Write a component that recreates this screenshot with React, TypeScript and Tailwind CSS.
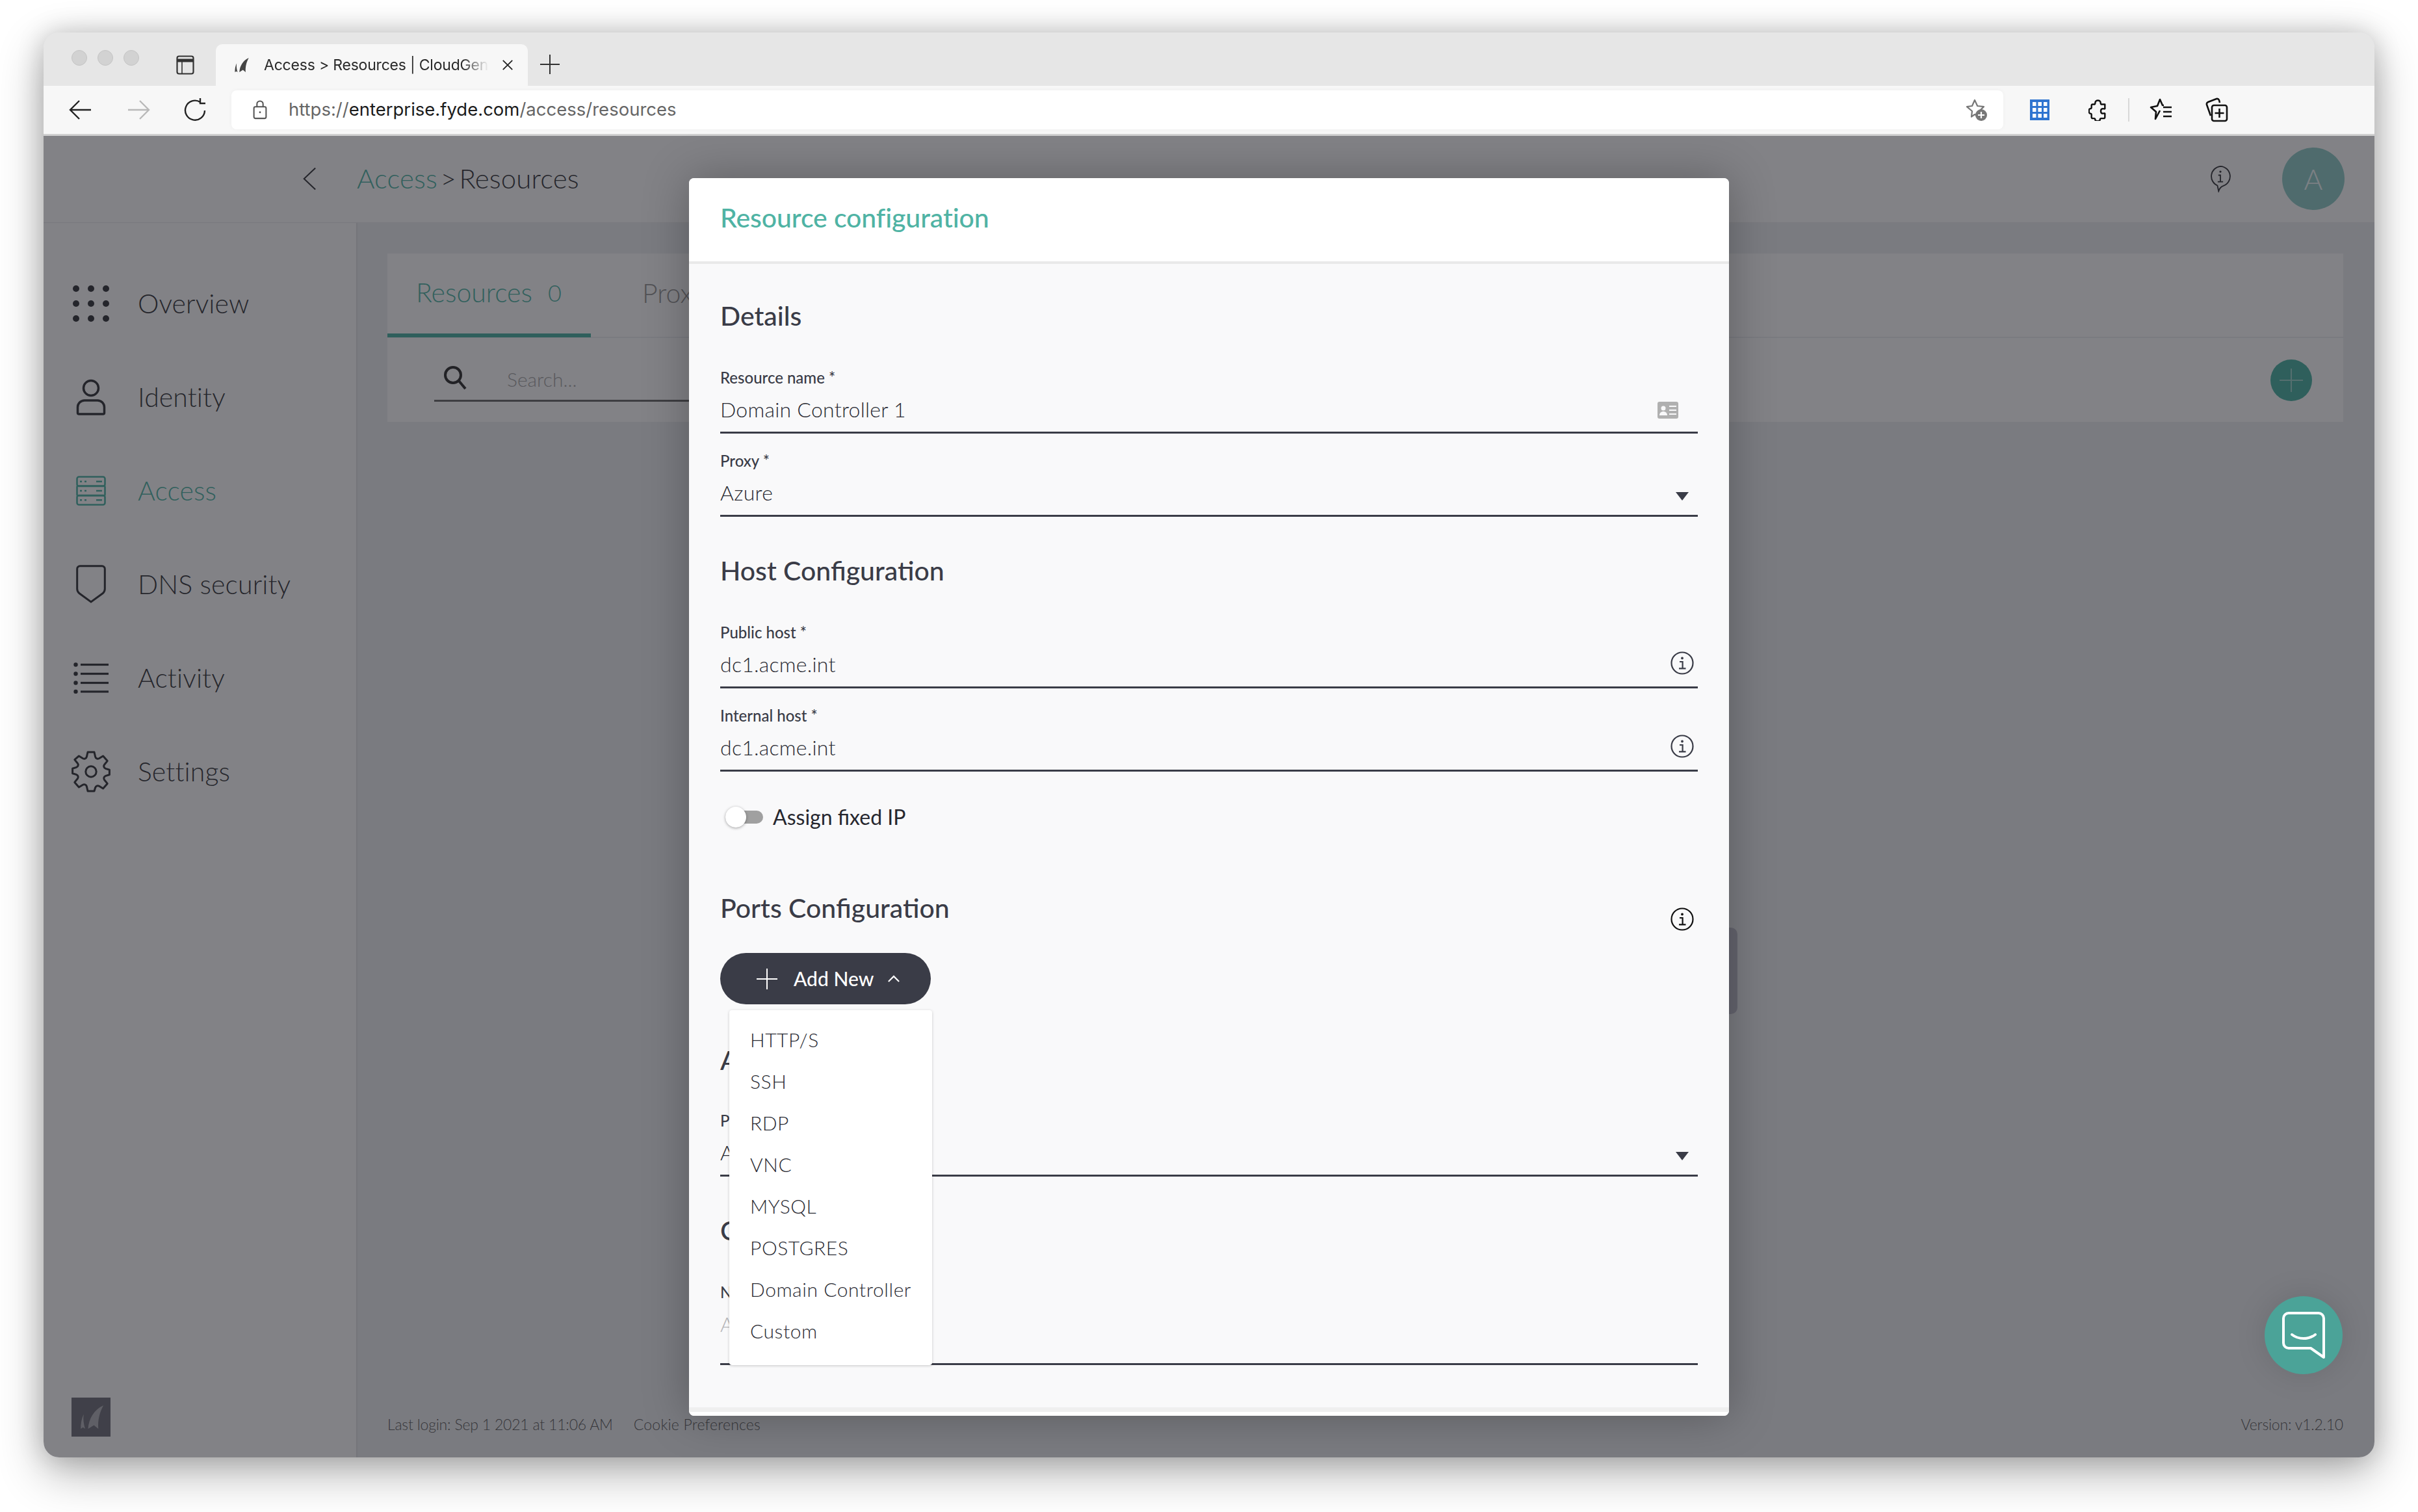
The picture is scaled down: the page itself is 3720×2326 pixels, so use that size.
import React from "react";

const Info = ({ className = "" }: { className?: string }) => (
  <svg viewBox="0 0 36 36" className={className} fill="none" stroke="currentColor">
    <circle cx="18" cy="18" r="16.5" strokeWidth="2.2" />
    <circle cx="18" cy="10.5" r="1.9" fill="currentColor" stroke="none" />
    <path d="M14 16h4.6v10M13 26.4h10.5" strokeWidth="2.2" />
  </svg>
);

const Caret = () => (
  <svg viewBox="0 0 20 13" className="w-[20px] h-[13px] text-[#3a3c47]" fill="currentColor">
    <path d="M0 0h20L10 13z" />
  </svg>
);

function Field({ label, value, right, valueClass = "text-[#2a2b33]", rowClass = "h-[71px]" }: { label: string; value: string; right?: React.ReactNode; valueClass?: string; rowClass?: string }) {
  return (
    <div className="flex flex-col">
      <div className="h-[30px] leading-[30px] text-[24px] font-medium text-[#3a3c47] tracking-[0px]">{label}</div>
      <div className={`${rowClass} border-b-[3px] border-[#3a3c47] flex justify-between relative`}>
        <span className={`h-[68px] leading-[68px] text-[32px] font-light tracking-[0.25px] ${valueClass}`}>{value}</span>
        {right}
      </div>
    </div>
  );
}

const H = ({ children, className = "" }: { children: React.ReactNode; className?: string }) => (
  <h2 className={`h-[50px] leading-[50px] text-[41px] font-medium text-[#3a3c47] tracking-[0px] ${className}`}>{children}</h2>
);

const IconDots = () => (
  <svg viewBox="0 0 56 56" className="w-[56px] h-[56px]" fill="currentColor">
    {[5, 28, 51].flatMap((y) => [5, 28, 51].map((x) => <circle key={`${x}-${y}`} cx={x} cy={y} r="5" />))}
  </svg>
);
const IconUser = () => (
  <svg viewBox="0 0 48 56" className="w-[48px] h-[56px]" fill="none" stroke="currentColor" strokeWidth="3.5">
    <circle cx="24" cy="14" r="11.5" />
    <path d="M14 33h20a10.5 10.5 0 0 1 10.5 10.5v8.5a2 2 0 0 1-2 2h-37a2 2 0 0 1-2-2v-8.5A10.5 10.5 0 0 1 14 33z" />
  </svg>
);
const IconServer = () => (
  <svg viewBox="0 0 46 46" className="w-[46px] h-[46px]" fill="none" stroke="currentColor" strokeWidth="2.6">
    <rect x="1.5" y="1.5" width="43" height="14.5" rx="3" />
    <rect x="1.5" y="15.5" width="43" height="15" rx="2" />
    <rect x="1.5" y="30" width="43" height="14.5" rx="3" />
    <path d="M6 8.7h3M13 8.7h3M31 8.7h9M6 23h3M13 23h3M31 23h9M6 37.3h3M13 37.3h3M31 37.3h9" />
  </svg>
);
const IconShield = () => (
  <svg viewBox="0 0 46 60" className="w-[46px] h-[60px]" fill="none" stroke="currentColor" strokeWidth="3">
    <path d="M6 1.7h34a4.3 4.3 0 0 1 4.3 4.3v31c0 3-1 5-3.2 6.8L23 57 5 43.8C2.7 42 1.7 40 1.7 37V6A4.3 4.3 0 0 1 6 1.7z" />
  </svg>
);
const IconList = () => (
  <svg viewBox="0 0 54 48" className="w-[54px] h-[48px]" fill="currentColor">
    {[3.5, 17.5, 31.5, 45].map((y) => (
      <g key={y}>
        <circle cx="3.5" cy={y} r="3.2" />
        <rect x="11" y={y - 1.6} width="43" height="3.2" />
      </g>
    ))}
  </svg>
);
const IconGear = () => (
  <svg viewBox="0 0 60 64" className="w-[60px] h-[64px]" fill="none" stroke="currentColor" strokeWidth="3" strokeLinejoin="round">
    <circle cx="30" cy="32" r="8.2" />
    <path d="M25 2h10l1.6 7.2a4 4 0 0 0 5.8 2.6l6.2-3.8 6.6 7.6-4.6 5.6a4 4 0 0 0 1.8 6.2l6 1.8v7.6l-6 1.8a4 4 0 0 0-1.8 6.2l4.6 5.6-6.6 7.6-6.2-3.8a4 4 0 0 0-5.8 2.6L35 62H25l-1.6-7.2a4 4 0 0 0-5.8-2.6L11.4 56l-6.6-7.6 4.6-5.6a4 4 0 0 0-1.8-6.2l-6-1.8v-7.6l6-1.8a4 4 0 0 0 1.8-6.2l-4.6-5.6L11.4 8l6.2 3.8a4 4 0 0 0 5.8-2.6z" />
  </svg>
);
const SharkFin = ({ className = "" }: { className?: string }) => (
  <svg viewBox="0 0 34 32" className={className} fill="currentColor">
    <path d="M13 32c1-14 8-26 21-32-5 9-8 20-7 32l-6-5zM3 32C3 25 4 18 7 12c-1 7 0 14 2 20l-3-2z" />
  </svg>
);

const navItems: { icon: React.ReactNode; label: string; active?: boolean }[] = [
  { icon: <IconDots />, label: "Overview" },
  { icon: <IconUser />, label: "Identity" },
  { icon: <IconServer />, label: "Access", active: true },
  { icon: <IconShield />, label: "DNS security" },
  { icon: <IconList />, label: "Activity" },
  { icon: <IconGear />, label: "Settings" },
];

const menu = ["HTTP/S", "SSH", "RDP", "VNC", "MYSQL", "POSTGRES", "Domain Controller", "Custom"];

export default function App() {
  return (
    <div className="w-[3720px] h-[2326px] bg-white pt-[50px] pl-[67px] overflow-hidden font-['Lato',sans-serif]">
      <div className="relative w-[3586px] h-[2192px] rounded-[24px] overflow-hidden flex flex-col shadow-[0_24px_70px_rgba(0,0,0,0.3),0_0_40px_rgba(0,0,0,0.18)] bg-[#ececef]">
        {/* tab strip */}
        <div className="h-[82px] shrink-0 bg-[#e6e6e6] flex items-end pl-[43px] font-['Inter',sans-serif]">
          <div className="flex gap-[16px] h-[82px] items-center pb-[4px] mr-[57px]">
            <span className="w-[24px] h-[24px] rounded-full bg-[#d2d2d2] border border-[#c4c4c4]" />
            <span className="w-[24px] h-[24px] rounded-full bg-[#d2d2d2] border border-[#c4c4c4]" />
            <span className="w-[24px] h-[24px] rounded-full bg-[#d2d2d2] border border-[#c4c4c4]" />
          </div>
          <div className="h-[82px] flex items-center pt-[18px] mr-[33px]">
            <svg viewBox="0 0 28 30" className="w-[28px] h-[30px]" fill="none" stroke="#333" strokeWidth="2.2">
              <rect x="1.5" y="1.5" width="25" height="27" rx="3" />
              <path d="M1.5 8h25" strokeWidth="5" />
              <path d="M9 8v20" strokeWidth="1.6" />
            </svg>
          </div>
          <div className="w-[480px] h-[64px] bg-[#f7f7f7] rounded-t-[10px] flex items-center pl-[26px]">
            <SharkFin className="w-[26px] h-[22px] text-[#444] mr-[22px]" />
            <span className="w-[346px] whitespace-nowrap overflow-hidden text-[23px] tracking-[-0.2px] text-[#2a2a2a] [mask-image:linear-gradient(to_right,black_88%,transparent)]">Access &gt; Resources | CloudGen Access</span>
            <svg viewBox="0 0 20 20" className="w-[18px] h-[18px] ml-[20px]" stroke="#222" strokeWidth="2"><path d="M2 2l16 16M18 2L2 18" /></svg>
          </div>
          <svg viewBox="0 0 30 30" className="w-[30px] h-[30px] ml-[19px] mb-[18px]" stroke="#333" strokeWidth="2"><path d="M15 0v30M0 15h30" /></svg>
        </div>
        {/* toolbar */}
        <div className="h-[77px] shrink-0 bg-[#f7f7f7] border-b-[3px] border-[#d0d0d0] flex items-center font-['Inter',sans-serif]">
          <svg viewBox="0 0 36 32" className="w-[36px] h-[32px] ml-[39px]" fill="none" stroke="#222" strokeWidth="2.4"><path d="M34 16H3M16 2L2 16l14 14" /></svg>
          <svg viewBox="0 0 36 32" className="w-[36px] h-[32px] ml-[53px]" fill="none" stroke="#b9b9b9" strokeWidth="2.4"><path d="M2 16h31M20 2l14 14-14 14" /></svg>
          <svg viewBox="0 0 36 36" className="w-[36px] h-[36px] ml-[52px]" fill="none" stroke="#222" strokeWidth="2.4"><path d="M25 6a15 15 0 1 0 7 13M25 0v8h8" /></svg>
          <div className="ml-[37px] w-[2726px] h-[60px] bg-white rounded-[8px] flex items-center pl-[32px] pr-[24px] shadow-[0_0_6px_rgba(0,0,0,0.04)]">
            <svg viewBox="0 0 24 32" className="w-[24px] h-[30px]" fill="none" stroke="#555" strokeWidth="2.2"><rect x="2" y="11" width="20" height="19" rx="2.5" /><path d="M7 11V6.5a5 5 0 0 1 10 0V11" /><circle cx="12" cy="20" r="1.5" fill="#555" stroke="none" /></svg>
            <span className="ml-[32px] text-[27.5px] text-[#666] tracking-[0px]">https://<span className="text-[#1c1c1c]">enterprise.fyde.com</span>/access/resources</span>
            <svg viewBox="0 0 36 36" className="w-[36px] h-[36px] ml-auto" fill="none"><path d="M16 3l4.2 9 9.8 1.2-7.2 6.8 1.8 9.8-8.6-4.8-5 3.6 1-8.6L4 13.2l8-1.2z" stroke="#777" strokeWidth="2.2" strokeLinejoin="round" /><circle cx="26" cy="26" r="9" fill="#777" /><path d="M26 21v10M21 26h10" stroke="#fff" strokeWidth="2.2" /></svg>
          </div>
          <svg viewBox="0 0 30 32" className="w-[30px] h-[32px] ml-[41px]"><rect width="30" height="32" fill="#2f74d0" /><g fill="#fff">{[4, 13, 22].flatMap((y) => [4, 12.5, 21].map((x) => <rect key={`${x}${y}`} x={x} y={y} width="5.5" height="6" />))}</g></svg>
          <svg viewBox="0 0 32 36" className="w-[30px] h-[34px] ml-[60px]" fill="none" stroke="#111" strokeWidth="2.6" strokeLinejoin="round"><path d="M11 7c0-6 9-6 9 0 0 1 .5 2 2 2h5v7c-1 1-2 0-3 0-5 0-5 8 0 8 1 0 2-1 3 0v6a2 2 0 0 1-2 2h-4c-1 0-2 1-2 2 0 3-8 3-8 0 0-1-1-2-2-2H7a2 2 0 0 1-2-2v-4c0-1-1-2-2-2-3 0-3-8 0-8 1 0 2-1 2-2V11a2 2 0 0 1 2-2h2c1 0 2-1 2-2z" /></svg>
          <span className="w-[2px] h-[36px] bg-[#d8d8d8] ml-[31px]" />
          <svg viewBox="0 0 36 36" className="w-[36px] h-[36px] ml-[31px]" fill="none" stroke="#111" strokeWidth="2.6" strokeLinejoin="round"><path d="M16 19l-7 13 1-11-8-7 10-2 4-10 4 9h2" /><path d="M21 14h13M21 21h13M21 28h13" /></svg>
          <svg viewBox="0 0 36 38" className="w-[36px] h-[38px] ml-[49px]" fill="none" stroke="#111" strokeWidth="2.6"><path d="M9 28L3 11c-.6-2 0-3 2-4l13-5c2-.6 3 0 4 2l1 4" /><rect x="11" y="12" width="23" height="24" rx="3" /><path d="M22.500 17v14M15.500 24h14" /></svg>
        </div>
        {/* header */}
        <div className="h-[134px] shrink-0 bg-white border-b border-[#e9e9ec] flex items-center text-[#16171c] pb-[2px]">
          <svg viewBox="0 0 24 40" className="w-[22px] h-[38px] ml-[398px]" fill="none" stroke="currentColor" strokeWidth="2.2"><path d="M22 2L3 20l19 18" /></svg>
          <div className="ml-[62px] text-[42px] font-light tracking-[0.1px] [word-spacing:-7px]"><span className="text-[#35ab98]">Access</span> &gt; Resources</div>
          <svg viewBox="0 0 38 46" className="w-[36px] h-[42px] ml-auto mr-[77px]" fill="none" stroke="currentColor" strokeWidth="2"><path d="M19 2a17 17 0 0 1 5 33c-3 1-6 3-8 9l-2-9.500A17 17 0 0 1 19 2z" /><circle cx="19" cy="11" r="1.800" fill="currentColor" stroke="none" /><path d="M15.500 17H19v11M14.500 28h9" /></svg>
          <div className="w-[96px] h-[96px] rounded-full bg-[#80c6c0] text-[#eefafa] text-[44px] font-light flex items-center justify-center mr-[46px]">A</div>
        </div>
        {/* body */}
        <div className="flex-1 flex min-h-0">
          <aside className="w-[483px] shrink-0 bg-white border-r-2 border-[#dedee2] flex flex-col pt-[52px] pb-[32px] text-[#16171c]">
            {navItems.map((n) => (
              <div key={n.label} className={`h-[144px] flex items-center ${n.active ? "text-[#35ab98]" : ""}`}>
                <span className="w-[145px] flex justify-center">{n.icon}</span>
                <span className="text-[41px] font-light tracking-[0.1px]">{n.label}</span>
              </div>
            ))}
            <div className="mt-auto ml-[43px] w-[60px] h-[60px] bg-[#5a5b66] flex items-center justify-center">
              <SharkFin className="w-[40px] h-[36px] text-[#a8a8ae]" />
            </div>
          </aside>
          <main className="flex-1 bg-[#eceef0] flex flex-col pt-[47px] pl-[46px] pr-[48px] pb-[34px] text-[#3a3c47]">
            <div className="h-[259px] bg-white flex flex-col">
              <div className="h-[130px] border-b-2 border-[#eceef0] flex items-start">
                <div className="w-[313px] h-[129px] border-b-[6px] border-[#30a896] flex items-center pl-[44px] pb-[4px] text-[#35ab98] text-[41px] font-light">
                  Resources<span className="ml-[24px] text-[36px]">0</span>
                </div>
                <span className="ml-[79px] h-[122px] flex items-center text-[41px] font-light text-[#888]">Proxies</span>
              </div>
              <div className="flex-1 flex items-center pl-[72px] pr-[48px]">
                <div className="w-[420px] h-[66px] border-b-[3px] border-[#555] flex items-center">
                  <svg viewBox="0 0 36 38" className="w-[36px] h-[38px] ml-[14px] -mt-[4px]" fill="none" stroke="#111" strokeWidth="4"><circle cx="15" cy="15" r="12" /><path d="M24 24l10 12" /></svg>
                  <span className="ml-[62px] text-[30px] font-light text-[#999]">Search...</span>
                </div>
                <div className="ml-auto w-[64px] h-[64px] rounded-full bg-[#30a896] flex items-center justify-center">
                  <svg viewBox="0 0 36 36" className="w-[36px] h-[36px]" stroke="#8fd0c6" strokeWidth="2"><path d="M18 0v36M0 18h36" /></svg>
                </div>
              </div>
            </div>
            <div className="mt-auto flex text-[23px] font-light text-[#444] tracking-[-0.2px]">
              <span>Last login: Sep 1 2021 at 11:06 AM</span>
              <span className="ml-[32px] tracking-[0.2px]">Cookie Preferences</span>
              <span className="ml-auto">Version: v1.2.10</span>
            </div>
          </main>
        </div>

        {/* scrim */}
        <div className="absolute left-0 right-0 bottom-0 top-[159px] bg-[#2e2e36]/60" />

        {/* scrollbar thumb peeking out of the modal */}
        <div className="absolute left-[2590px] top-[1377px] w-[16px] h-[133px] rounded-r-[10px] bg-[#65656f]" />

        {/* modal */}
        <div className="absolute left-[993px] top-[224px] w-[1600px] h-[1904px] rounded-[8px] overflow-hidden flex flex-col bg-[#f9f9fa] shadow-[0_0_70px_rgba(0,0,0,0.28)]">
          <div className="h-[132px] shrink-0 bg-white border-b-4 border-[#e9e9e9] flex items-center pl-[48px] pb-[6px] text-[#4fb3a4] text-[41px] font-medium tracking-[-0.1px]">Resource configuration</div>
          <div className="flex-1 flex flex-col px-[48px] pt-[55px]">
            <H>Details</H>
            <div className="mt-[55px] flex flex-col gap-[27px]">
              <Field
                label="Resource name *"
                value="Domain Controller 1"
                right={
                  <svg viewBox="0 0 32 26" className="absolute right-[30px] top-[22px] w-[32px] h-[26px]"><rect width="32" height="26" rx="3" fill="#b0b0b0" /><circle cx="9" cy="10" r="3.500" fill="#f9f9fa" /><path d="M3 21c0-8 12-8 12 0z" fill="#f9f9fa" /><path d="M18 7h11M18 13h11M18 19h11" stroke="#f9f9fa" strokeWidth="2" /></svg>
                }
              />
              <Field label="Proxy *" value="Azure" right={<span className="absolute right-[14px] top-[33px]"><Caret /></span>} />
            </div>
            <H className="mt-[58px]">Host Configuration</H>
            <div className="mt-[55px] flex flex-col gap-[27px]">
              <Field label="Public host *" value="dc1.acme.int" right={<Info className="absolute right-[6px] top-[14px] w-[36px] h-[36px] text-[#3a3c47]" />} />
              <Field label="Internal host *" value="dc1.acme.int" right={<Info className="absolute right-[6px] top-[14px] w-[36px] h-[36px] text-[#3a3c47]" />} />
            </div>
            <div className="mt-[50px] h-[40px] flex items-center">
              <div className="relative w-[58px] h-[20px] ml-[8px] bg-[#a0a0a0] rounded-full">
                <span className="absolute left-0 top-[-6px] w-[32px] h-[32px] rounded-full bg-white shadow-[0_1px_4px_rgba(0,0,0,0.35)]" />
              </div>
              <span className="ml-[15px] text-[32px] text-[#26272e] tracking-[0px]">Assign fixed IP</span>
            </div>
            <div className="mt-[95px] h-[50px] shrink-0 flex items-start justify-between">
              <H>Ports Configuration</H>
              <Info className="w-[36px] h-[36px] mr-[6px] mt-[24px] text-[#111]" />
            </div>
            <div className="mt-[44px] w-[324px] h-[79px] rounded-full bg-[#3a3c47] text-white flex items-center pl-[56px] shrink-0">
              <svg viewBox="0 0 32 32" className="w-[32px] h-[32px]" stroke="#fff" strokeWidth="2"><path d="M16 0v32M0 16h32" /></svg>
              <span className="ml-[25px] text-[30px] font-medium">Add New</span>
              <svg viewBox="0 0 20 12" className="w-[18px] h-[11px] ml-[22px]" fill="none" stroke="#fff" strokeWidth="2.4"><path d="M1 11l9-9 9 9" /></svg>
            </div>
            <H className="mt-[61px]">Access Policy</H>
            <div className="mt-[53px]">
              <Field label="Policy *" value="Allow all" right={<span className="absolute right-[14px] top-[33px]"><Caret /></span>} />
            </div>
            <H className="mt-[58px]">Custom</H>
            <div className="mt-[55px]">
              <Field label="Name" value="Add a name" valueClass="text-[#b5b5b8]" rowClass="h-[97px]" />
            </div>
          </div>
          <div className="h-[13px] shrink-0 bg-white border-t-[7px] border-[#efefef]" />
        </div>

        {/* dropdown */}
        <div className="absolute left-[1055px] top-[1504px] w-[312px] h-[546px] bg-white rounded-[4px] shadow-[0_1px_4px_rgba(0,0,0,0.2)] flex flex-col pt-[13px] pl-[32px] text-[30px] font-light text-[#2a2b33] tracking-[0.55px]">
          {menu.map((m) => (
            <div key={m} className="h-[64px] shrink-0 flex items-center whitespace-nowrap">{m}</div>
          ))}
        </div>

        {/* chat */}
        <div className="absolute left-[3417px] top-[1944px] w-[120px] h-[120px] rounded-full bg-[#4ba398] flex items-center justify-center shadow-[0_0_50px_rgba(0,0,0,0.12)]">
          <svg viewBox="0 0 66 72" className="w-[66px] h-[72px]" fill="none" stroke="#fff" strokeWidth="4" strokeLinecap="round" strokeLinejoin="round">
            <path d="M10 2h46a8 8 0 0 1 8 8v60L44 56H10a8 8 0 0 1-8-8V10a8 8 0 0 1 8-8z" />
            <path d="M15 35c10 8 26 8 36 0" />
          </svg>
        </div>
      </div>
    </div>
  );
}
